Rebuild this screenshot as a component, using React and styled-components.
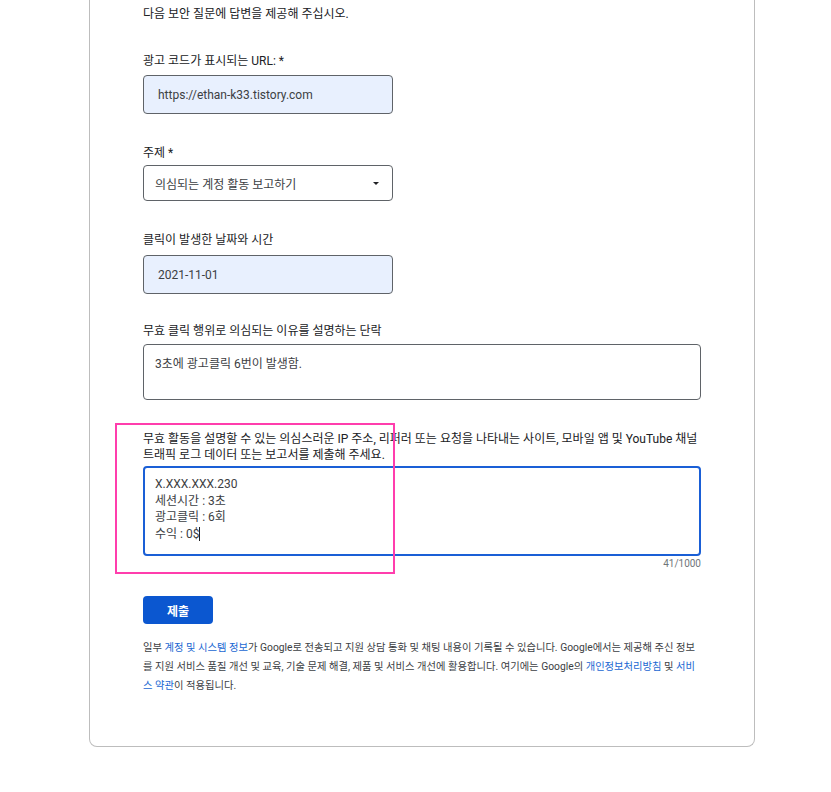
import styled, { createGlobalStyle } from 'styled-components';

const GlobalStyle = createGlobalStyle`
    body {
        margin: 0;
        background: #fff;
        font-family: Roboto, "Noto Sans CJK KR", sans-serif;
        color: #202124;
    }
`;

const Page = styled.div`
    padding-left: 89px;
    width: 666px;
`;

const Card = styled.form`
    border: 1px solid #bdbdbd;
    border-top: 0;
    border-radius: 0 0 8px 8px;
    padding: 4px 53px 51px 53px;
`;

const Intro = styled.p`
    margin: 0;
    font-size: 12px;
    line-height: 20px;
`;

const Field = styled.div`
    position: relative;
    margin-top: ${(p) => p.$gap}px;
    display: flex;
    flex-direction: column;
`;

const Label = styled.label`
    font-size: 12px;
    line-height: 16px;
    margin-bottom: ${(p) => p.$space}px;
`;

const Box = styled.div`
    box-sizing: border-box;
    width: ${(p) => (p.$wide ? '558px' : '250px')};
    height: ${(p) => p.$h}px;
    border: ${(p) => (p.$focus ? '2px solid #1a5fd6' : '1px solid #5f6368')};
    border-radius: 4px;
    background: ${(p) => (p.$filled ? '#e8f0fe' : '#fff')};
    padding: ${(p) => p.$pad};
    font-size: 12px;
    color: #3c4043;
    display: flex;
    align-items: ${(p) => (p.$top ? 'flex-start' : 'center')};
    justify-content: space-between;
`;

const Arrow = styled.span`
    width: 0;
    height: 0;
    border-left: 3.5px solid transparent;
    border-right: 3.5px solid transparent;
    border-top: 3.5px solid #202124;
    margin-right: 13px;
`;

const Lines = styled.div`
    line-height: 16.5px;
    color: #3c4043;
`;

const Caret = styled.span`
    display: inline-block;
    width: 1px;
    height: 14px;
    background: #202124;
    vertical-align: -3px;
`;

const Counter = styled.div`
    text-align: right;
    font-size: 10px;
    line-height: 12px;
    color: #70757a;
    margin-top: 2px;
    width: 558px;
`;

const Highlight = styled.div`
    position: absolute;
    left: -28px;
    top: -8px;
    width: 276px;
    height: 147px;
    border: 2px solid #ff3ead;
    pointer-events: none;
`;

const SubmitButton = styled.button`
    margin-top: 26px;
    width: 70px;
    height: 28px;
    border: 0;
    border-radius: 4px;
    background: #0b57d0;
    color: #fff;
    font-family: inherit;
    font-size: 12px;
    font-weight: 700;
`;

const Notice = styled.p`
    margin: 14px 0 0;
    font-size: 10.3px;
    line-height: 19px;
    color: #3c4043;
`;

const Link = styled.a`
    color: #1967d2;
    text-decoration: none;
`;

export default function App() {
    return (
        <Page>
            <GlobalStyle />
            <Card onSubmit={(e) => e.preventDefault()}>
                <Intro>다음 보안 질문에 답변을 제공해 주십시오.</Intro>

                <Field $gap={29}>
                    <Label $space={6}>광고 코드가 표시되는 URL: *</Label>
                    <Box $h={39} $pad="0 14px" $filled>
                        https://ethan-k33.tistory.com
                    </Box>
                </Field>

                <Field $gap={31}>
                    <Label $space={4}>주제 *</Label>
                    <Box $h={36} $pad="0 0 0 11px">
                        의심되는 계정 활동 보고하기
                        <Arrow />
                    </Box>
                </Field>

                <Field $gap={31}>
                    <Label $space={7}>클릭이 발생한 날짜와 시간</Label>
                    <Box $h={39} $pad="0 14px" $filled>
                        2021-11-01
                    </Box>
                </Field>

                <Field $gap={29}>
                    <Label $space={5}>무효 클릭 행위로 의심되는 이유를 설명하는 단락</Label>
                    <Box $h={56} $pad="9px 11px" $wide $top>
                        3초에 광고클릭 6번이 발생함.
                    </Box>
                </Field>

                <Field $gap={31}>
                    <Highlight />
                    <Label $space={3}>
                        무효 활동을 설명할 수 있는 의심스러운 IP 주소, 리퍼러 또는 요청을 나타내는 사이트, 모바일 앱 및 YouTube 채널
                        트래픽 로그 데이터 또는 보고서를 제출해 주세요.
                    </Label>
                    <Box $h={90} $pad="8px 10px" $wide $top $focus>
                        <Lines>
                            X.XXX.XXX.230
                            <br />
                            세션시간 : 3초
                            <br />
                            광고클릭 : 6회
                            <br />
                            수익 : 0$
                            <Caret />
                        </Lines>
                    </Box>
                    <Counter>41/1000</Counter>
                </Field>

                <SubmitButton type="submit">제출</SubmitButton>

                <Notice>
                    일부 <Link href="#">계정 및 시스템 정보</Link>가 Google로 전송되고 지원 상담 통화 및 채팅 내용이 기록될 수
                    있습니다. Google에서는 제공해 주신 정보를 지원 서비스 품질 개선 및 교육, 기술 문제 해결, 제품 및 서비스 개선에
                    활용합니다. 여기에는 Google의 <Link href="#">개인정보처리방침</Link> 및 <Link href="#">서비스 약관</Link>이
                    적용됩니다.
                </Notice>
            </Card>
        </Page>
    );
}
